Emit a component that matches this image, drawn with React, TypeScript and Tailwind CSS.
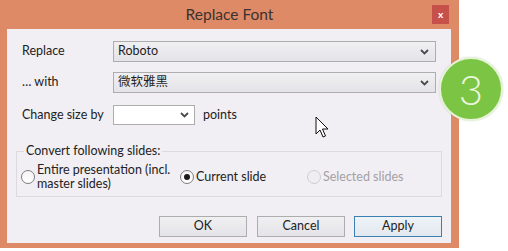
import React from 'react';

const ui = { fontFamily: 'Lato, "Noto Sans", "Noto Sans CJK SC", sans-serif' };

function Chevron() {
  return (
    <svg width="9" height="6" viewBox="0 0 9 6" className="shrink-0">
      <polyline points="1,1 4.5,4.5 8,1" fill="none" stroke="#4a4a4a" strokeWidth="1.8" />
    </svg>
  );
}

function Select({ value, className }: { value: string; className: string }) {
  return (
    <div className={`flex items-center justify-between border border-[#adadad] bg-gradient-to-b from-[#f0eff2] to-[#e4e3e7] pl-[4px] pr-[6px] ${className}`}>
      <span className="text-[12.5px] text-[#1e1e1e]" style={{ fontFamily: 'Lato, "Noto Sans CJK SC", sans-serif' }}>{value}</span>
      <Chevron />
    </div>
  );
}

function Radio({ checked, disabled }: { checked?: boolean; disabled?: boolean }) {
  return (
    <span
      className={`flex h-[14px] w-[14px] shrink-0 items-center justify-center rounded-full border ${
        disabled ? 'border-[#cfcdd2] bg-[#eeedf0]' : 'border-[#7d7d7d] bg-gradient-to-b from-[#f4f4f4] to-[#ffffff]'
      }`}
    >
      {checked && <span className="h-[6px] w-[6px] rounded-full bg-[#1a1a1a]" />}
    </span>
  );
}

export default function App() {
  return (
    <div className="relative h-[251px] w-[508px] overflow-hidden bg-white" style={ui}>
      <div className="flex h-[248px] w-[459px] flex-col bg-[#df8a66]">
        {/* title bar */}
        <div className="relative flex h-[29px] shrink-0 items-center justify-center">
          <span className="text-[15.5px] text-[#3a3230]">Replace Font</span>
          <div className="absolute right-[10px] top-[5px] flex h-[19px] w-[17px] items-center justify-center bg-[#c6504a] pb-[2px] text-[10px] font-bold leading-none text-white">
            x
          </div>
        </div>

        <div className="mb-[5px] ml-[7px] mr-[8px] flex flex-1 flex-col bg-[#f1eff3] pt-[12px] text-[12.5px] text-[#222]">
          <div className="flex h-[21px] items-center">
            <span className="w-[106px] pl-[15px]">Replace</span>
            <Select value="Roboto" className="h-[21px] w-[323px]" />
          </div>
          <div className="mt-[10px] flex h-[21px] items-center">
            <span className="w-[106px] pl-[15px]">… with</span>
            <Select value="微软雅黑" className="h-[21px] w-[323px]" />
          </div>
          <div className="mt-[12px] flex h-[20px] items-center">
            <span className="w-[106px] pl-[15px]">Change size by</span>
            <div className="flex h-[20px] w-[82px] items-center justify-end border border-[#adadad] bg-white pr-[5px]">
              <Chevron />
            </div>
            <span className="ml-[8px]">points</span>
          </div>

          <fieldset className="mx-[9px] mt-[19px] h-[53px] border border-[#dcdadf] px-[7px]">
            <legend className="px-[2px] leading-[14px]">Convert following slides:</legend>
            <div className="mt-[5px] flex items-center">
              <div className="-ml-[3px] flex w-[159px] items-center">
                <Radio />
                <span className="ml-[2px] leading-[14px]">
                  Entire presentation (incl.
                  <br />
                  master slides)
                </span>
              </div>
              <div className="flex w-[127px] items-center">
                <Radio checked />
                <span className="ml-[2px]">Current slide</span>
              </div>
              <div className="flex items-center">
                <Radio disabled />
                <span className="ml-[2px] text-[#a3a1a6]">Selected slides</span>
              </div>
            </div>
          </fieldset>

          <div className="mt-[19px] flex justify-end pr-[9px]">
            <button className="h-[21px] w-[88px] border border-[#adadad] bg-gradient-to-b from-[#f0eff2] to-[#e4e3e7]">OK</button>
            <button className="ml-[10px] h-[21px] w-[88px] border border-[#adadad] bg-gradient-to-b from-[#f0eff2] to-[#e4e3e7]">Cancel</button>
            <button className="ml-[9px] h-[21px] w-[88px] border border-[#3c7fb1] bg-gradient-to-b from-[#eef3f8] to-[#e2e8ef]">Apply</button>
          </div>
        </div>
      </div>

      {/* step badge */}
      <div className="absolute left-[439px] top-[57px] flex h-[64px] w-[64px] items-center justify-center rounded-full border-[2px] border-[#e6f4d6] bg-[#7cc444] shadow-[0_0_2px_rgba(0,0,0,0.15)]">
        <span className="text-[42px] font-light leading-none text-[#eaf7de]" style={{ fontFamily: 'Lato, sans-serif' }}>3</span>
      </div>

      {/* mouse cursor */}
      <svg className="absolute left-[315px] top-[116px]" width="16" height="25" viewBox="0 0 16 25">
        <path d="M1 1 L1 18 L5 14 L8 21 L10.5 20 L7.5 13 L13 13 Z" fill="#fff" stroke="#111" strokeWidth="1" strokeLinejoin="round" />
      </svg>
    </div>
  );
}
